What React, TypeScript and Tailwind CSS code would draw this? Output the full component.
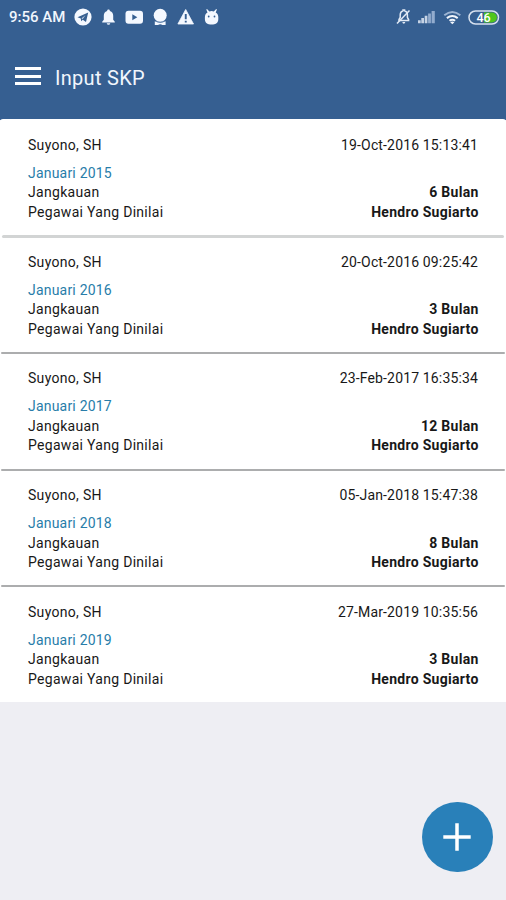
const records = [
  { date: '19-Oct-2016 15:13:41', period: 'Januari 2015', range: '6 Bulan' },
  { date: '20-Oct-2016 09:25:42', period: 'Januari 2016', range: '3 Bulan' },
  { date: '23-Feb-2017 16:35:34', period: 'Januari 2017', range: '12 Bulan' },
  { date: '05-Jan-2018 15:47:38', period: 'Januari 2018', range: '8 Bulan' },
  { date: '27-Mar-2019 10:35:56', period: 'Januari 2019', range: '3 Bulan' },
];

function LeftIcons() {
  return (
    <svg width="150" height="24" viewBox="72 5 150 24" fill="#f4f8ff">
      <circle cx="83" cy="17" r="8.6" />
      <path d="M77.500 17.200 88.200 12.600 86 22 82.800 19.800 81.200 21.200 80.800 18.500Z" fill="#365f91" />
      <path d="M81.500 18.300 85.500 15.200 82.600 19.200Z" fill="#b9cbe2" />
      <path d="M108.500 9.500c1 0 1.400.7 1.400 1.500 2.300.7 3.300 2.500 3.300 4.800v4l1.600 1.900v.9h-12.600v-.9l1.600-1.900v-4c0-2.300 1-4.100 3.300-4.800 0-.8.400-1.500 1.400-1.500ZM106.700 23.200h3.600q-.3 1.600-1.800 1.600t-1.800-1.600Z" />
      <rect x="125.500" y="10.700" width="17.500" height="13" rx="3" />
      <path d="M132.300 14.200v6l5-3Z" fill="#365f91" />
      <circle cx="160.200" cy="15.300" r="6.500" />
      <path d="M154.800 21.300q5.400 2.800 10.800 0v3.700h-10.800Z" />
      <path d="M155.500 21.300q4.700 2.400 9.400 0" stroke="#6f8fb8" strokeWidth=".7" fill="none" />
      <path d="M158 24.900q2.200-1.500 4.400 0Z" fill="#365f91" />
      <path d="M185.700 9.500 193.500 24h-15.600Z" strokeLinejoin="round" stroke="#f4f8ff" strokeWidth=".8" />
      <path d="M184.800 14h1.900v5.300h-1.900ZM184.800 20.700h1.900v1.800h-1.900Z" fill="#365f91" />
      <path d="m207 9 2.400 2.400q2.200-.7 4.400 0L216.200 9l.7.600-1.200 2.800c1.600 1 2.600 2.400 2.600 4.700v2c0 3.500-2 5.400-5.200 5.400h-3c-3.200 0-5.200-1.900-5.200-5.400v-2c0-2.300 1-3.700 2.600-4.700l-1.200-2.800Z" />
      <circle cx="208.700" cy="16.500" r=".9" fill="#365f91" />
      <circle cx="214.500" cy="16.500" r=".9" fill="#365f91" />
    </svg>
  );
}

function RightIcons() {
  return (
    <svg width="108" height="24" viewBox="394 5 108 24" fill="none">
      <path d="M399 20.500v-1l1.200-2v-2.500c0-2.400 1-3.800 2.800-4.300V10h1.600v.8c1.800.5 2.800 1.900 2.800 4.200v2.500l1.200 2v1Z" stroke="#e2eaf5" strokeWidth="1.500" />
      <path d="M402.300 22h3q-.3 1.800-1.500 1.800T402.300 22Z" fill="#e2eaf5" />
      <path d="m397 23.500 12.500-13" stroke="#e2eaf5" strokeWidth="1.500" />
      <path d="M418 23.300v-3h2.700v3ZM421.300 23.300v-5.200h2.700v5.200ZM424.700 23.300v-7.600h2.700v7.600Z" fill="#c6d3e5" />
      <path d="M428.100 23.300V13.400h2.800v9.900ZM431.600 23.300V11h3.200v12.300Z" fill="#93acce" />
      <path d="M444.300 15.300q8-6.600 16 0" stroke="#9db4d2" strokeWidth="2" />
      <path d="M446.900 18.100q5.400-4.300 10.800 0" stroke="#f2f6fc" strokeWidth="2" />
      <path d="M449.500 20.800q2.800-2 5.600 0" stroke="#f2f6fc" strokeWidth="2" />
      <path d="m450.200 22.200 2.100 2.100 2.100-2.100q-2.100-1.300-4.200 0Z" fill="#f2f6fc" />
      <rect x="469" y="11" width="29.500" height="13" rx="6.500" stroke="#d7e1ef" strokeWidth="1.500" />
      <path d="M484 12.600h8a4.900 4.900 0 0 1 0 9.800h-8Z" fill="#4fc51d" />
      <text x="483.500" y="22" textAnchor="middle" fontFamily="Roboto, sans-serif" fontSize="12.500" fontWeight="500" fill="#fff">46</text>
    </svg>
  );
}

export default function App() {
  return (
    <div className="relative flex h-[900px] w-[506px] flex-col overflow-hidden bg-[#eeeef3] font-[Roboto,sans-serif] text-[#181818]">
      <header className="h-[120px] shrink-0 bg-[#365f91] text-[#f1f6fd]">
        <div className="flex h-[34px] items-center pl-[9px] pr-[4px]">
          <span className="w-[63px] whitespace-nowrap pt-px text-[15px] font-medium">9:56 AM</span>
          <LeftIcons />
          <div className="ml-auto flex"><RightIcons /></div>
        </div>
        <div className="flex h-[86px] items-center pl-[14.500px]">
          <button aria-label="Menu" className="flex w-[26.500px] -translate-y-px flex-col gap-[4.500px]">
            <span className="h-[3px] bg-white" />
            <span className="h-[3px] bg-white" />
            <span className="h-[3px] bg-white" />
          </button>
          <h1 className="ml-[14px] pt-px text-[20px] leading-6 tracking-[0.3px]">Input SKP</h1>
        </div>
      </header>
      <main className="-mt-px rounded-t-[3px] bg-white">
        {records.map((r, i) => (
          <article key={r.period} className={i === 0 ? 'h-[116.200px] pt-px' : 'h-[116.700px]'}>
            {i > 0 && (
              <div className={i === 1 ? 'mx-[2px] h-[3px] rounded-full bg-[#d2d4d4]' : 'mx-[1px] h-[2px] rounded-full bg-[#acadae]'} />
            )}
            <div className={`px-[28px] text-[14px] leading-[19.500px] tracking-[0.300px] ${i === 1 ? 'pt-[14.500px]' : i === 0 ? 'pt-[15.500px]' : 'pt-[15.500px]'}`}>
              <div className="mb-[8.500px] flex justify-between">
                <span>Suyono, SH</span>
                <time className="tracking-[0.150px]">{r.date}</time>
              </div>
              <div className="tracking-[0.200px] text-[#287da9]">{r.period}</div>
              <div className="flex justify-between">
                <span>Jangkauan</span>
                <span className="-mr-[0.700px] font-bold">{r.range}</span>
              </div>
              <div className="flex justify-between">
                <span>Pegawai Yang Dinilai</span>
                <span className="-mr-[0.700px] font-bold">Hendro Sugiarto</span>
              </div>
            </div>
          </article>
        ))}
      </main>
      <button aria-label="Tambah" className="absolute left-[422.200px] top-[801.700px] flex size-[70.600px] items-center justify-center rounded-full bg-[#2980b9]">
        <svg width="28" height="28" viewBox="0 0 28 28" stroke="#fff" strokeWidth="3.500">
          <path d="M14 .3v27.400M.3 14h27.400" />
        </svg>
      </button>
    </div>
  );
}
